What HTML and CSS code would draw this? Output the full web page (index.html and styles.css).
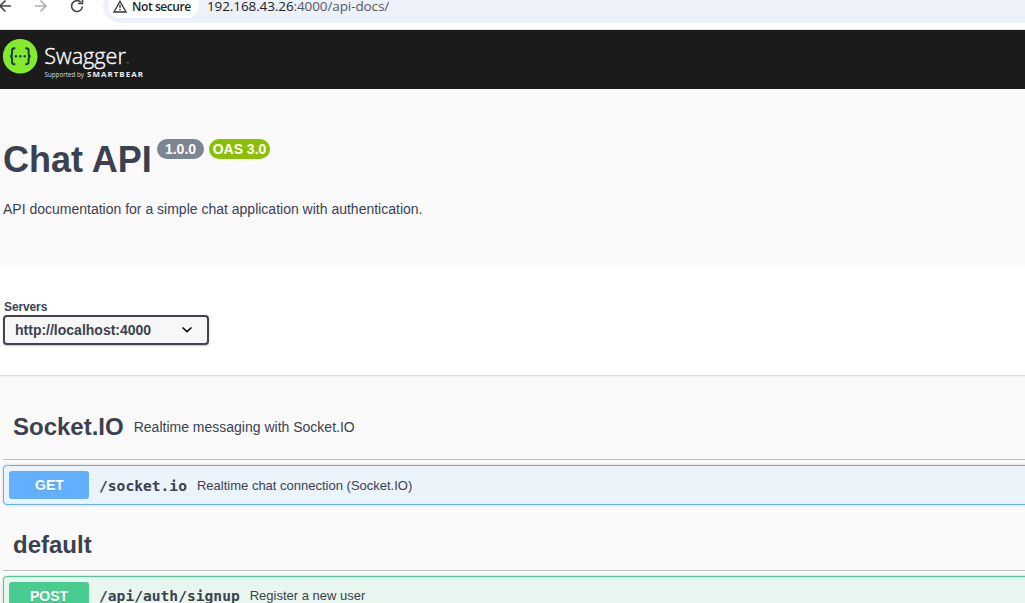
FILE: index.html
```html
<!DOCTYPE html>
<html lang="en">
<head>
<meta charset="utf-8">
<title>Chat API</title>
<link rel="stylesheet" href="styles.css">
</head>
<body>
<div class="browser-bar">
  <svg class="nav-icons" width="103" height="28" viewBox="0 0 103 28" fill="none" stroke-width="1.6">
    <path stroke="#474747" d="M11 6H0M5.500 .5L0 6l5.500 5.500"/>
    <path stroke="#adadad" d="M35 6h11M40.500 .5L46 6l-5.500 5.500"/>
    <path stroke="#474747" d="M82.400 6.500a5.400 5.400 0 1 1-1.600-4.300M82.500-1v4.500H78"/>
  </svg>
  <div class="address">
    <div class="security">
      <svg width="14" height="13" viewBox="0 0 14 13"><path d="M7 1.200L13 12H1z" fill="none" stroke="#333" stroke-width="1.300"/><path d="M7 4.500v3.700M7 9v1.400" stroke="#333" stroke-width="1.300"/></svg>
      <span class="security-text">Not secure</span>
    </div>
    <span class="url">192.168.43.26<span class="url-path">:4000/api-docs/</span></span>
  </div>
</div>
<header class="topbar">
  <svg width="150" height="59" viewBox="0 0 150 59">
    <circle cx="20.200" cy="26.300" r="17.300" fill="#85ea2d"/>
    <g fill="none" stroke="#173647" stroke-width="1.900"><path d="M15.300 18.300h-1c-1.700 0-2.300 1-2.300 2.500v3c0 1.500-.7 2.500-2 2.500 1.300 0 2 1 2 2.500v3c0 1.500.6 2.500 2.300 2.500h1M25.300 18.300h1c1.700 0 2.300 1 2.300 2.500v3c0 1.500.7 2.500 2 2.500-1.300 0-2 1-2 2.500v3c0 1.500-.6 2.500-2.300 2.500h-1"/></g>
    <g fill="#173647"><circle cx="15.900" cy="26.300" r="1.200"/><circle cx="20.300" cy="26.300" r="1.200"/><circle cx="24.700" cy="26.300" r="1.200"/></g>
    <text class="logo-name" x="44.300" y="33.500" textLength="81.500" lengthAdjust="spacingAndGlyphs">Swagger</text>
    <path d="M126.500 32.700h2.500" stroke="#888" stroke-width=".8"/>
    <text class="logo-by" x="44.500" y="47" textLength="39.500" lengthAdjust="spacingAndGlyphs">Supported by</text>
    <text class="logo-brand" x="87" y="47" textLength="57" lengthAdjust="spacingAndGlyphs">SMARTBEAR</text>
  </svg>
</header>
<section class="info">
  <div class="title-row">
    <h1 class="title">Chat API</h1>
    <span class="badge version">1.0.0</span>
    <span class="badge oas">OAS 3.0</span>
  </div>
  <p class="description">API documentation for a simple chat application with authentication.</p>
</section>
<section class="servers">
  <span class="servers-label">Servers</span>
  <div class="select"><span>http://localhost:4000</span>
    <svg width="12" height="8" viewBox="0 0 12 8"><path d="M1.500 1.500L6 5.700l4.500-4.200" fill="none" stroke="#111" stroke-width="1.700"/></svg>
  </div>
</section>
<main class="operations">
  <div class="tag"><h2 class="tag-name">Socket.IO</h2><span class="tag-desc">Realtime messaging with Socket.IO</span></div>
  <div class="op get"><span class="method">GET</span><span class="path">/socket.io</span><span class="summary">Realtime chat connection (Socket.IO)</span></div>
  <div class="tag second"><h2 class="tag-name">default</h2></div>
  <div class="op post"><span class="method">POST</span><span class="path">/api/auth/signup</span><span class="summary">Register a new user</span></div>
</main>
</body>
</html>
```
FILE: styles.css
```css
* { box-sizing: border-box; }
body { margin: 0; height: 603px; overflow: hidden; background: #fff; color: #3b4151; font-family: "Liberation Sans", Arial, sans-serif; }
.browser-bar { display: flex; height: 30px; border-bottom: 1px solid #dfe1e4; overflow: hidden; font-family: "Open Sans", "Noto Sans", sans-serif; }
.nav-icons { flex: none; }
.address { display: flex; flex: 1; height: 34px; margin: -11px -30px 0 0; padding: 5px 0 5px 5px; background: #ecf1fa; border-radius: 17px; }
.security { display: flex; align-items: center; gap: 5px; width: 91px; height: 24px; padding-left: 5px; border-radius: 12px; background: #fff; }
.security svg { flex: none; }
.security-text { padding-top: 1px; font-size: 12px; font-weight: 600; line-height: 16px; color: #1f1f1f; letter-spacing: -.42px; white-space: nowrap; }
.url { margin: 4px 0 0 8px; font-size: 13.500px; line-height: 16px; color: #202124; letter-spacing: -.1px; white-space: nowrap; }
.url-path { color: #55585d; }
.topbar { height: 59px; background: #1b1b1b; }
.topbar svg { display: block; }
.logo-name { font: 300 22.500px "Open Sans", sans-serif; fill: #fff; stroke: #fff; stroke-width: .35px; }
.logo-by { font: 6.500px "Open Sans", sans-serif; fill: #ddd; }
.logo-brand { font: 700 7.500px "Open Sans", sans-serif; letter-spacing: 1px; fill: #eee; }
.info { height: 178px; padding: 50px 3px 0; background: #fafafa; }
.title-row { display: flex; align-items: flex-start; height: 41px; }
.title { width: 149px; margin: 0 5px 0 0; font-size: 36px; line-height: 41px; white-space: nowrap; }
.badge { height: 20px; border-radius: 10px; color: #fff; font-size: 14px; font-weight: 700; line-height: 20px; text-align: center; white-space: nowrap; }
.version { width: 47px; background: #7d8492; }
.oas { width: 61px; margin-left: 5px; background: #89bf04; }
.description { margin: 21px 0 0; font-size: 14px; line-height: 16px; }
.servers { height: 108px; padding: 33px 3px 0; }
.servers-label { display: block; padding-left: 1px; font-size: 12px; font-weight: 700; line-height: 14px; letter-spacing: -.12px; }
.select { display: flex; align-items: center; justify-content: space-between; width: 206px; height: 30px; margin-top: 1px; padding: 0 14px 0 10px; border: 2px solid #41444e; border-radius: 4px; background: #f7f7f7; box-shadow: 0 1px 2px rgba(0,0,0,.25); font-size: 14px; font-weight: 700; }
.operations { height: 228px; padding: 1px 0 0 3px; border-top: 1px solid #dcdddd; background: #fafafa; box-shadow: inset 0 1px 0 #f0f0f0; }
.tag { display: flex; align-items: center; height: 83px; padding: 18px 10px 0; border-bottom: 1px solid #bdbec1; }
.tag.second { height: 66px; padding-top: 14px; }
.tag-name { margin: 0; font-size: 24px; line-height: 28px; }
.tag-desc { padding-left: 10px; font-size: 14px; }
.op { display: flex; align-items: center; height: 40px; margin: 5px -5px 0 0; padding: 0 5px; border: 1px solid #61affe; border-radius: 4px; background: #ebf3fb; box-shadow: 0 0 3px rgba(0,0,0,.19); }
.method { width: 80px; height: 28px; border-radius: 3px; background: #61affe; color: #fff; font-size: 14px; font-weight: 700; line-height: 28px; text-align: center; text-shadow: 0 1px 0 rgba(0,0,0,.1); }
.get .method { padding-left: 1px; }
.path { padding: 2px 10px 0; font: 700 14.620px/18px "DejaVu Sans Mono", monospace; }
.summary { font-size: 13px; }
.post { border-color: #49cc90; background: #e8f6f0; }
.post .method { background: #49cc90; }
.post .path { padding: 0 10px; }
.post .summary { padding-bottom: 2px; }
```
